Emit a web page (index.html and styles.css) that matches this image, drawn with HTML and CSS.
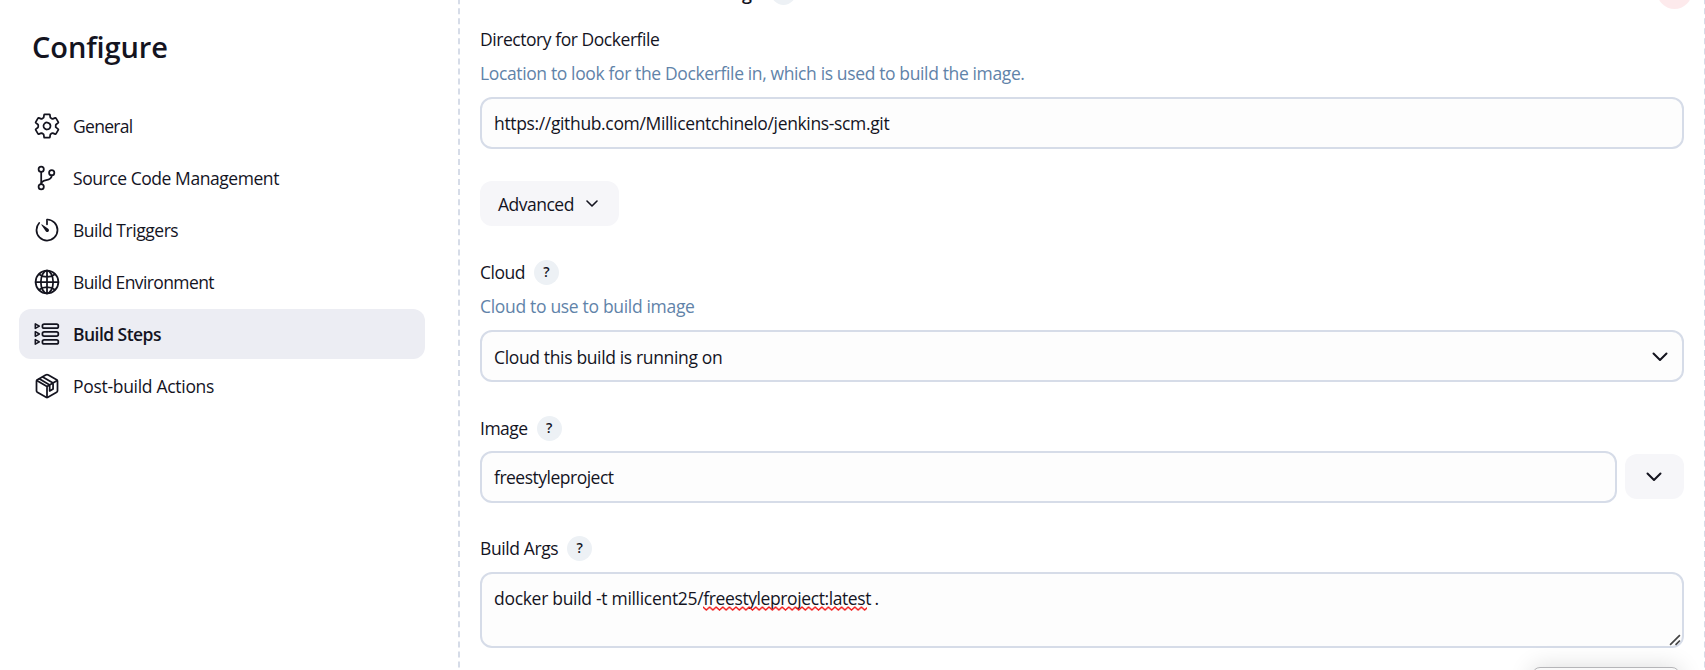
FILE: index.html
```html
<!DOCTYPE html>
<html lang="en">
<head>
<meta charset="utf-8">
<title>Configure</title>
<link rel="stylesheet" href="styles.css">
</head>
<body>
<div class="page">
  <aside class="sidebar">
    <h1 class="title">Configure</h1>
    <nav class="tasks">
      <a class="task"><svg class="icon" viewBox="0 0 512 512"><path d="M262.29 192.31a64 64 0 1057.4 57.4 64.13 64.13 0 00-57.4-57.4zM416.39 256a154.34 154.34 0 01-1.53 20.79l45.21 35.46a10.81 10.81 0 012.45 13.75l-42.77 74a10.81 10.81 0 01-13.14 4.59l-44.9-18.08a16.11 16.11 0 00-15.17 1.75A164.48 164.48 0 01325 400.8a15.94 15.94 0 00-8.82 12.14l-6.73 47.89a11.08 11.08 0 01-10.68 9.17h-85.54a11.11 11.11 0 01-10.69-8.87l-6.72-47.82a16.07 16.07 0 00-9-12.22 155.3 155.3 0 01-21.46-12.57 16 16 0 00-15.11-1.71l-44.89 18.07a10.81 10.81 0 01-13.14-4.58l-42.77-74a10.8 10.8 0 012.45-13.75l38.21-30a16.05 16.05 0 006-14.08c-.36-4.17-.58-8.33-.58-12.5s.21-8.27.58-12.35a16 16 0 00-6.07-13.94l-38.19-30A10.81 10.81 0 0149.48 186l42.77-74a10.81 10.81 0 0113.14-4.59l44.9 18.08a16.11 16.11 0 0015.17-1.75A164.48 164.48 0 01187 111.2a15.94 15.94 0 008.82-12.14l6.73-47.89A11.08 11.08 0 01213.23 42h85.54a11.11 11.11 0 0110.69 8.87l6.72 47.82a16.07 16.07 0 009 12.22 155.3 155.3 0 0121.46 12.57 16 16 0 0015.11 1.71l44.89-18.07a10.81 10.81 0 0113.14 4.58l42.77 74a10.8 10.8 0 01-2.45 13.75l-38.21 30a16.05 16.05 0 00-6.05 14.08c.33 4.14.55 8.3.55 12.47z"/></svg><span class="t-general">General</span></a>
      <a class="task"><svg class="icon" viewBox="0 0 512 512"><circle cx="150" cy="96" r="48"/><circle cx="150" cy="416" r="48"/><path d="M150 368V144"/><circle cx="342" cy="160" r="48"/><path d="M342 208c0 128-192 48-192 160"/></svg><span class="t-scm">Source Code Management</span></a>
      <a class="task"><svg class="icon" viewBox="0 0 512 512"><path d="M112.91 128A191.85 191.85 0 0064 254c-1.18 106.35 85.65 193.8 192 194 106.2.2 192-85.83 192-192 0-104.54-83.55-189.61-187.5-192a4.36 4.36 0 00-4.5 4.37V152"/><path class="solid" d="M233.38 278.63l-79-113a8.13 8.13 0 0111.32-11.32l113 79a32.5 32.5 0 01-37.25 53.26 33.21 33.21 0 01-8.07-7.94z"/></svg><span class="t-trig">Build Triggers</span></a>
      <a class="task"><svg class="icon" viewBox="0 0 512 512"><path d="M256 48C141.13 48 48 141.13 48 256s93.13 208 208 208 208-93.13 208-208S370.87 48 256 48z"/><path d="M256 48c-58.07 0-112.67 93.13-112.67 208S197.93 464 256 464s112.67-93.13 112.67-208S314.07 48 256 48z"/><path d="M117.33 117.33c38.24 27.15 86.38 43.34 138.67 43.34s100.43-16.19 138.67-43.34M394.67 394.67c-38.24-27.15-86.38-43.34-138.67-43.34s-100.43 16.19-138.67 43.34M256 48v416M464 256H48"/></svg><span class="t-env">Build Environment</span></a>
      <a class="task active"><svg class="icon" viewBox="0 0 512 512"><rect x="172" y="75" width="291" height="74" rx="32"/><rect x="172" y="219" width="291" height="74" rx="32"/><rect x="172" y="363" width="291" height="74" rx="32"/><path class="thin" d="M42 70v84l74-42zM42 214v84l74-42zM42 358v84l74-42z"/></svg><span class="t-steps">Build Steps</span></a>
      <a class="task"><svg class="icon" viewBox="0 0 512 512"><path d="M448 341.37V170.61A32 32 0 00432.11 143l-152-88.46a47.94 47.94 0 00-48.24 0L79.89 143A32 32 0 0064 170.61v170.76A32 32 0 0079.89 369l152 88.46a48 48 0 0048.24 0l152-88.46A32 32 0 00448 341.37z"/><path d="M69 153.99l187 110 187-110M256 463.99v-200M115 125l190 112v110l62-38V200L178 90"/></svg><span class="t-post">Post-build Actions</span></a>
    </nav>
  </aside>
  <main class="step">
    <header class="step-head"><span class="step-name">Build / Publish Docker Image</span><span class="help">?</span><span class="remove"></span></header>
    <section class="field dir">
      <div class="label"><span class="t-dir">Directory for Dockerfile</span></div>
      <div class="desc t-loc">Location to look for the Dockerfile in, which is used to build the image.</div>
      <div class="input"><span class="t-url">https://github.com/Millicentchinelo/jenkins-scm.git</span></div>
    </section>
    <div class="button advanced"><span class="t-adv">Advanced</span><svg class="chev-s" viewBox="0 0 12 8"><path d="M1 1l5 5 5-5"/></svg></div>
    <section class="field cloud">
      <div class="label"><span class="t-cloud">Cloud</span><span class="help">?</span></div>
      <div class="desc t-cdesc">Cloud to use to build image</div>
      <div class="input select"><span class="t-sel">Cloud this build is running on</span><svg class="chev" viewBox="0 0 16 10"><path d="M1.500 1.500L8 8l6.500-6.500"/></svg></div>
    </section>
    <section class="field image">
      <div class="label"><span class="t-image">Image</span><span class="help">?</span></div>
      <div class="row">
        <div class="input"><span class="t-free">freestyleproject</span></div>
        <div class="button more"><svg class="chev" viewBox="0 0 16 10"><path d="M1.500 1.500L8 8l6.500-6.500"/></svg></div>
      </div>
    </section>
    <section class="field args">
      <div class="label"><span class="t-args">Build Args</span><span class="help">?</span></div>
      <div class="input area"><span class="t-docker">docker build -t millicent25/<span class="misspelt">freestyleproject:latest<svg class="wave" width="164" height="5"><defs><pattern id="wave" width="6.600" height="5" patternUnits="userSpaceOnUse"><path d="M-1 0L0 1l3.300 3L6.600 1l1-1"/></pattern></defs><rect width="164" height="5" fill="url(#wave)"/></svg></span><span class="tail"> .</span></span><svg class="grip" viewBox="0 0 11 11"><path d="M1 10L10 1M6 10l4-4"/></svg></div>
    </section>
  </main>
  <div class="popup"></div>
</div>
</body>
</html>
```
FILE: styles.css
```css
* { box-sizing: border-box; }
body { margin: 0; background: #fff; color: #14141f; font: 17.5px/24px "Open Sans", "Noto Sans", sans-serif; }
.page { position: relative; display: flex; width: 1705px; height: 670px; overflow: hidden; background: #fff; }
.sidebar { width: 458px; flex: none; padding: 27px 33px 0 19px; }
.title { margin: 0 0 34px 13px; font-size: 29px; line-height: 40px; font-weight: 600; letter-spacing: -0.1px; }
.tasks { display: flex; flex-direction: column; gap: 2px; }
.task { display: flex; align-items: center; gap: 12px; height: 50px; padding: 0 14px; border-radius: 12px; white-space: nowrap; }
.task.active { background: #ecedf3; font-weight: 600; }
.icon { width: 28px; height: 28px; flex: none; fill: none; stroke: #14141f; stroke-width: 32; stroke-linecap: round; stroke-linejoin: round; }
.icon .solid { fill: #14141f; stroke: none; }
.icon .thin { stroke-width: 28; }
.step { width: 1248px; flex: none; margin-top: -32px; height: 800px; padding: 0 20px; border: 2px dashed #d6dce8; border-top: 0; }
.step-head { display: flex; align-items: center; height: 55px; font-weight: 600; }
.step-name { margin: -6px 0 0 33px; font-size: 18px; white-space: nowrap; }
.step-head .help { margin-left: 9px; margin-top: -7px; }
.remove { width: 35px; height: 35px; border-radius: 50%; background: #fdeaec; margin-left: auto; margin-top: -9px; margin-right: -8px; }
.field { display: flex; flex-direction: column; }
.label { display: flex; align-items: center; gap: 9px; height: 34px; white-space: nowrap; }
.desc { height: 34px; line-height: 34px; color: #6183a9; white-space: nowrap; }
.desc, .label { align-self: flex-start; }
.help { width: 25px; height: 25px; border-radius: 50%; background: #edf1f5; font: 600 14px/24px "Open Sans", sans-serif; text-align: center; }
.input { display: flex; align-items: center; position: relative; height: 52px; padding: 0 12px; background: #fdfdfd; border: 2px solid #d6dce8; border-radius: 12px; white-space: nowrap; flex: 1 0 auto; }
.select { justify-content: space-between; padding-right: 14px; }
.select .t-sel { padding-top: 2px; }
.chev { width: 16px; height: 10px; margin-top: 1px; fill: none; stroke: #14141f; stroke-width: 2; stroke-linecap: round; stroke-linejoin: round; }
.more .chev { margin: 0 1px 0 0; }
.chev-s { width: 12px; height: 8px; fill: none; stroke: #14141f; stroke-width: 1.600; stroke-linecap: round; stroke-linejoin: round; }
.button { display: flex; align-items: center; height: 45px; border-radius: 12px; background: #f6f6f9; }
.dir { margin-top: -1px; }
.dir .input { margin-top: 7px; }
.advanced { width: 139px; margin-top: 32px; padding-left: 18px; gap: 12px; }
.cloud { margin-top: 29px; }
.cloud .input { margin-top: 7px; }
.image { margin-top: 29px; }
.row { display: flex; align-items: center; gap: 8px; margin-top: 6px; }
.row .button { margin-top: -1px; }
.more { width: 59px; justify-content: center; }
.args { margin-top: 28px; }
.args .input { margin-top: 7px; }
.area { height: 76px; align-items: flex-start; padding-top: 12px; }
.misspelt { position: relative; letter-spacing: -0.4px; }
.tail { letter-spacing: -1.2px; }
.wave { position: absolute; left: 0; top: 20px; width: 164px; height: 5px; }
.wave path { fill: none; stroke: #f01c1c; stroke-width: 1.400; }
.grip { position: absolute; right: 1px; bottom: 0; width: 12px; height: 12px; stroke: #444; stroke-width: 1.500; fill: none; }
.popup { position: absolute; left: 1532px; top: 667px; width: 148px; height: 40px; border: 1px solid #b5b5b8; border-radius: 8px; background: #f9f9f9; box-shadow: 0 0 24px rgba(0, 0, 0, .14); }

/* Tracking per label */
.t-general { letter-spacing: -0.7px; }
.t-scm { letter-spacing: -0.44px; }
.t-trig { letter-spacing: -0.46px; }
.t-env { letter-spacing: -0.6px; }
.t-steps { letter-spacing: -0.54px; }
.t-post { letter-spacing: -0.3px; }
.t-dir { letter-spacing: -0.45px; }
.t-loc { letter-spacing: -0.37px; }
.t-url { letter-spacing: -0.35px; }
.t-adv { letter-spacing: -0.5px; }
.t-cloud { letter-spacing: -0.5px; }
.t-cdesc { letter-spacing: -0.32px; }
.t-sel { letter-spacing: -0.35px; }
.t-image { letter-spacing: -0.5px; }
.t-free { letter-spacing: -0.5px; }
.t-args { letter-spacing: -0.4px; }
.t-docker { letter-spacing: -0.3px; }
```
